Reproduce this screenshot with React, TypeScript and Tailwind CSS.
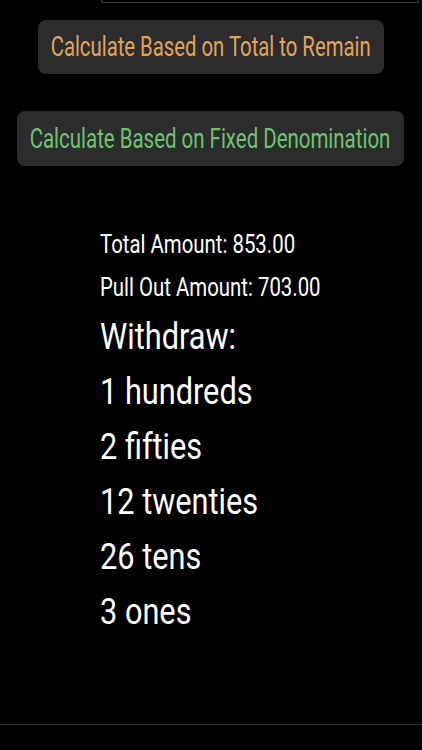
const rows = ["Withdraw:", "1 hundreds", "2 fifties", "12 twenties", "26 tens", "3 ones"];

export default function App() {
  return (
    <div className="w-[422px] h-[750px] bg-black flex flex-col font-['Roboto',sans-serif] text-white overflow-hidden">
      {/* bottom edge of the input field above */}
      <div className="ml-[101px] mr-[3px] h-[3px] border border-t-0 border-[#3a3a3c] rounded-b-[4px]" />

      <button className="mt-[17px] ml-[38px] w-[346px] h-[54px] rounded-[8px] bg-[#2c2c2e] flex items-center justify-center">
        <span className="inline-block whitespace-nowrap text-[28px] leading-none text-[#e3a458] scale-x-[0.725]">
          Calculate Based on Total to Remain
        </span>
      </button>

      <button className="mt-[37px] ml-[17px] w-[387px] h-[55px] rounded-[8px] bg-[#2c2c2e] flex items-center justify-center">
        <span className="inline-block whitespace-nowrap text-[28px] leading-none text-[#6cc46f] scale-x-[0.73]">
          Calculate Based on Fixed Denomination
        </span>
      </button>

      <div className="mt-[57px] ml-[100px] flex flex-col">
        <span className="inline-block origin-left whitespace-nowrap text-[25px] leading-[43px] scale-x-[0.815]">
          Total Amount: 853.00
        </span>
        <span className="inline-block origin-left whitespace-nowrap text-[25px] leading-[43px] scale-x-[0.815]">
          Pull Out Amount: 703.00
        </span>
        {rows.map((r) => (
          <span key={r} className="inline-block origin-left whitespace-nowrap text-[37px] leading-[55px] scale-x-[0.83]">
            {r}
          </span>
        ))}
      </div>

      <div className="mt-auto mb-[25px] h-px bg-[#333335]" />
    </div>
  );
}
